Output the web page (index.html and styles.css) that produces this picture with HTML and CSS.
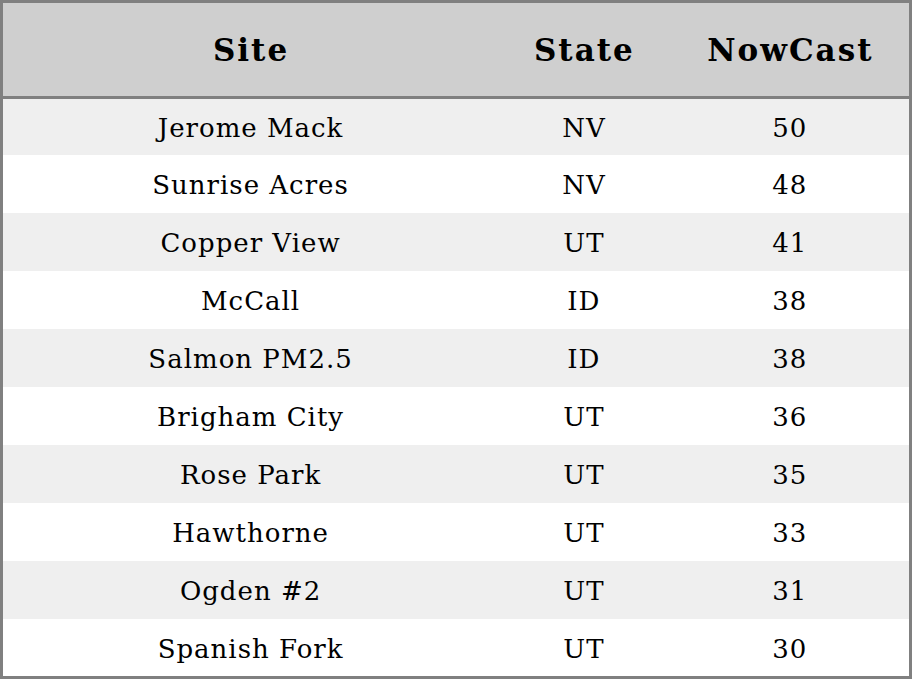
FILE: index.html
```html
<!DOCTYPE html>
<html>
<head>
<meta charset="utf-8">
<link rel="stylesheet" href="styles.css">
</head>
<body>
<table class="aq">
  <colgroup>
    <col class="c-site">
    <col class="c-state">
    <col class="c-now">
  </colgroup>
  <thead>
    <tr><th>Site</th><th>State</th><th>NowCast</th></tr>
  </thead>
  <tbody>
    <tr><td>Jerome Mack</td><td>NV</td><td>50</td></tr>
    <tr><td>Sunrise Acres</td><td>NV</td><td>48</td></tr>
    <tr><td>Copper View</td><td>UT</td><td>41</td></tr>
    <tr><td>McCall</td><td>ID</td><td>38</td></tr>
    <tr><td>Salmon PM2.5</td><td>ID</td><td>38</td></tr>
    <tr><td>Brigham City</td><td>UT</td><td>36</td></tr>
    <tr><td>Rose Park</td><td>UT</td><td>35</td></tr>
    <tr><td>Hawthorne</td><td>UT</td><td>33</td></tr>
    <tr><td>Ogden #2</td><td>UT</td><td>31</td></tr>
    <tr><td>Spanish Fork</td><td>UT</td><td>30</td></tr>
  </tbody>
</table>
</body>
</html>
```
FILE: styles.css
```css
html, body {
  margin: 0;
  padding: 0;
  background: #ffffff;
}
.aq {
  width: 912px;
  border-collapse: collapse;
  border: 3px solid #808080;
  font-family: "DejaVu Serif", serif;
  color: #000;
  table-layout: fixed;
}
.c-site { width: 494px; }
.c-state { width: 172px; }
.c-now { width: 240px; }
.aq th {
  background: #cfcfcf;
  font-size: 31px;
  font-weight: bold;
  letter-spacing: 2px;
  height: 93px;
  padding: 0 0 0 2px;
  text-align: center;
  border-bottom: 3px solid #808080;
}
.aq td {
  font-size: 26px;
  letter-spacing: 1px;
  text-align: center;
  padding: 2px 0 0 1px;
  height: 56px;
}
.aq tbody tr:first-child td { height: 54px; }
.aq tbody tr:last-child td { height: 55px; }
.aq tbody tr:nth-child(odd) td {
  background: #efefef;
}
```
